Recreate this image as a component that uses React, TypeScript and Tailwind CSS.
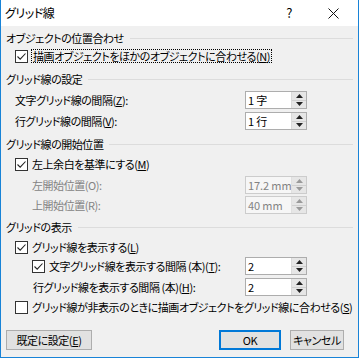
import React from 'react';

const font = "font-['Noto_Sans_CJK_JP','Noto_Sans',sans-serif] [font-feature-settings:'palt']";

const Check: React.FC<{ checked?: boolean }> = ({ checked }) => (
  <span className="flex h-[13px] w-[13px] shrink-0 items-center justify-center border border-[#333333] bg-white">
    {checked && (
      <svg width="11" height="11" viewBox="0 0 11 11">
        <path d="M1.5 5.5 L4.2 8.2 L9.5 2.5" fill="none" stroke="#222" strokeWidth="1.1" />
      </svg>
    )}
  </span>
);

const Section: React.FC<{ title: string; className?: string }> = ({ title, className }) => (
  <div className={`flex h-[16px] items-center pl-[5px] pr-[5px] ${className ?? ''}`}>
    <span className="shrink-0">{title}</span>
    <div className="ml-[6px] h-px flex-1 bg-[#dcdcdc]" />
  </div>
);

const Spin: React.FC<{ value: string; disabled?: boolean }> = ({ value, disabled }) => (
  <div
    className={`flex h-[18px] w-[62px] shrink-0 border ${
      disabled ? 'border-[#cccccc] bg-[#f6f6f6] text-[#838383]' : 'border-[#adadad] bg-white text-black'
    }`}
  >
    <div className="flex min-w-0 flex-1 items-center whitespace-nowrap pl-[2px] text-[11px] leading-none tracking-[-0.1px]">
      {value}
    </div>
    <div className={`flex w-[15px] shrink-0 flex-col border-l ${disabled ? 'border-[#e0e0e0]' : 'border-[#dadada]'} bg-[#e6e6e6]`}>
      <div className="flex flex-1 items-center justify-center border-b border-[#d0d0d0]">
        <svg width="7" height="4" viewBox="0 0 7 4">
          <path d="M0 4 L3.5 0 L7 4 Z" fill={disabled ? '#9a9a9a' : '#222'} />
        </svg>
      </div>
      <div className="flex flex-1 items-center justify-center">
        <svg width="7" height="4" viewBox="0 0 7 4">
          <path d="M0 0 L3.5 4 L7 0 Z" fill={disabled ? '#9a9a9a' : '#222'} />
        </svg>
      </div>
    </div>
  </div>
);

const SpinRow: React.FC<{ label: React.ReactNode; value: string; disabled?: boolean; indent?: string; className?: string }> = ({
  label,
  value,
  disabled,
  indent = 'pl-[14px]',
  className,
}) => (
  <div className={`flex h-[18px] items-center pr-[51px] ${indent} ${className ?? ''}`}>
    <div className={`flex flex-1 items-center whitespace-nowrap ${disabled ? 'text-[#838383]' : ''}`}>{label}</div>
    <Spin value={value} disabled={disabled} />
  </div>
);

const Btn: React.FC<{ children: React.ReactNode; primary?: boolean; className?: string }> = ({ children, primary, className }) => (
  <div
    className={`flex h-[20px] items-center justify-center whitespace-nowrap bg-[#e1e1e1] ${
      primary ? 'border-2 border-[#0078d7]' : 'border border-[#adadad]'
    } ${className ?? ''}`}
  >
    {children}
  </div>
);

export default function App() {
  return (
    <div
      className={`h-[358px] w-[359px] overflow-hidden border-x border-b border-[#1883d7] bg-[#f0f0f0] text-[11px] tracking-[-0.45px] text-black ${font}`}
    >
      {/* title bar */}
      <div className="flex h-[26px] items-center bg-white pl-[4px]">
        <span className="flex-1 text-[12px]">グリッド線</span>
        <span className="mr-[36px] text-[13px]">?</span>
        <svg width="11" height="11" viewBox="0 0 11 11" className="mr-[19px]">
          <path d="M0.5 0.5 L10.5 10.5 M10.5 0.5 L0.5 10.5" stroke="#111" strokeWidth="1" />
        </svg>
      </div>

      <Section title="オブジェクトの位置合わせ" className="mt-[4px]" />
      <div className="mt-[2px] flex h-[16px] items-center gap-[3px] pl-[14px]">
        <Check checked />
        <span className="whitespace-nowrap border border-dotted border-black px-px leading-[12px]">
          描画オブジェクトをほかのオブジェクトに合わせる(<u>N</u>)
        </span>
      </div>

      <Section title="グリッド線の設定" className="mt-[7px]" />
      <SpinRow label={<>文字グリッド線の間隔(<u>Z</u>):</>} value="1 字" className="mt-[4px]" />
      <SpinRow label={<>行グリッド線の間隔(<u>V</u>):</>} value="1 行" className="mt-[3px]" />

      <Section title="グリッド線の開始位置" className="mt-[6px]" />
      <div className="mt-[4px] flex h-[16px] items-center gap-[4px] pl-[14px]">
        <Check checked />
        <span className="whitespace-nowrap">
          左上余白を基準にする(<u>M</u>)
        </span>
      </div>
      <SpinRow label="左開始位置(O):" value="17.2 mm" disabled indent="pl-[31px]" className="mt-[4px]" />
      <SpinRow label="上開始位置(R):" value="40 mm" disabled indent="pl-[31px]" className="mt-[2px]" />

      <Section title="グリッドの表示" className="mt-[5px]" />
      <div className="mt-[4px] flex h-[16px] items-center gap-[4px] pl-[14px]">
        <Check checked />
        <span className="whitespace-nowrap">
          グリッド線を表示する(<u>L</u>)
        </span>
      </div>
      <SpinRow
        label={
          <span className="flex items-center gap-[4px]">
            <Check checked />
            <span>
              文字グリッド線を表示する間隔 (本)(<u>T</u>):
            </span>
          </span>
        }
        value="2"
        indent="pl-[31px]"
        className="mt-[2px]"
      />
      <SpinRow label={<>行グリッド線を表示する間隔 (本)(<u>H</u>):</>} value="2" indent="pl-[32px]" className="mt-[3px]" />
      <div className="mt-[3px] flex h-[16px] items-center gap-[4px] pl-[14px]">
        <Check />
        <span className="whitespace-nowrap">
          グリッド線が非表示のときに描画オブジェクトをグリッド線に合わせる(<u>S</u>)
        </span>
      </div>

      {/* buttons */}
      <div className="mt-[15px] flex items-center pl-[5px] pr-[14px]">
        <Btn className="w-[86px]">
          既定に設定(<u>E</u>)
        </Btn>
        <div className="flex-1" />
        <Btn primary className="w-[62px]">
          OK
        </Btn>
        <Btn className="ml-[9px] w-[54px]">キャンセル</Btn>
      </div>
    </div>
  );
}
